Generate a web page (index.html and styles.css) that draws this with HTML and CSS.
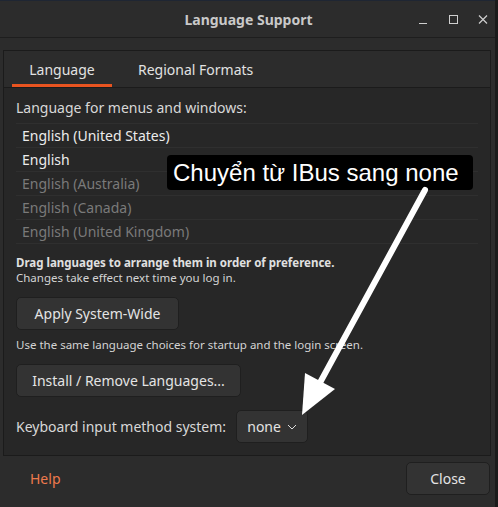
FILE: index.html
```html
<!DOCTYPE html>
<html>
<head>
<meta charset="utf-8">
<link rel="stylesheet" href="styles.css">
</head>
<body>
<div class="window">
  <div class="titlebar">
    <div></div>
    <div class="title">Language Support</div>
    <div class="controls">
      <svg class="ctl" width="12" height="12" viewBox="0 0 12 12"><path d="M2 9.5h8" stroke="#cfcfcf" stroke-width="1"/></svg>
      <svg class="ctl" width="12" height="12" viewBox="0 0 12 12"><rect x="2.5" y="1.5" width="8" height="8" fill="none" stroke="#cfcfcf" stroke-width="1"/></svg>
      <svg class="ctl" width="12" height="12" viewBox="0 0 12 12"><path d="M2 1.5l8 8M10 1.5l-8 8" stroke="#cfcfcf" stroke-width="1.2"/></svg>
    </div>
  </div>
  <div class="body">
    <div class="notebook">
      <div class="tabs">
        <div class="tab active">Language</div>
        <div class="tab">Regional Formats</div>
      </div>
      <div class="page">
        <div class="label">Language for menus and windows:</div>
        <div class="list">
          <div class="row">English (United States)</div>
          <div class="row">English</div>
          <div class="row dim">English (Australia)</div>
          <div class="row dim">English (Canada)</div>
          <div class="row dim">English (United Kingdom)</div>
        </div>
        <div class="note">
          <div class="strong">Drag languages to arrange them in order of preference.</div>
          <div>Changes take effect next time you log in.</div>
        </div>
        <div class="btnrow"><button class="btn apply">Apply System-Wide</button></div>
        <div class="note single">Use the same language choices for startup and the login screen.</div>
        <div class="btnrow"><button class="btn install">Install / Remove Languages...</button></div>
        <div class="kbrow">
          <span class="label">Keyboard input method system:</span>
          <button class="btn combo">none <svg width="10" height="6" viewBox="0 0 10 6"><path d="M1 1l4 4 4-4" fill="none" stroke="#dcdcdc" stroke-width="1"/></svg></button>
        </div>
      </div>
    </div>
    <div class="footer">
      <button class="help">Help</button>
      <button class="btn close">Close</button>
    </div>
  </div>
  <div class="callout">Chuyển từ IBus sang none</div>
  <svg class="arrow" width="498" height="507" viewBox="0 0 498 507">
    <line x1="425" y1="190" x2="316" y2="390" stroke="#fff" stroke-width="6" stroke-linecap="round"/>
    <polygon points="302,415 305,373 335,389" fill="#fff"/>
  </svg>
</div>
</body>
</html>
```
FILE: styles.css
```css
* { box-sizing: border-box; }
html, body { margin: 0; padding: 0; }
body {
  background: #1b1b1b;
  width: 498px;
  height: 507px;
  overflow: hidden;
  font-family: "Noto Sans", "DejaVu Sans", sans-serif;
  color: #dadada;
}
.window {
  position: relative;
  width: 495px;
  height: 507px;
  background: #2c2c2c;
  display: flex;
  flex-direction: column;
  border-top: 1px solid #1f2633;
}
.titlebar {
  height: 37px;
  border-bottom: 1px solid #1e1e1e;
  display: grid;
  grid-template-columns: 1fr auto 1fr;
  align-items: center;
}
.title {
  font-weight: bold;
  font-size: 14px;
  color: #c9c9c9;
  padding-left: 2px;
}
.controls {
  display: flex;
  justify-content: flex-end;
  gap: 18px;
  padding-right: 6px;
  padding-top: 1px;
}
.ctl { display: block; }
.body {
  flex: 1;
  display: flex;
  flex-direction: column;
  padding: 12px 4px 0 3px;
}
.notebook {
  border: 1px solid #1b1b1b;
  display: flex;
  flex-direction: column;
}
.tabs {
  height: 37px;
  display: flex;
  padding-left: 8px;
  border-bottom: 1px solid #1b1b1b;
  background: #2c2c2c;
}
.tab {
  font-size: 14px;
  color: #e2e2e2;
  display: flex;
  align-items: center;
  padding: 3px 26px 0 26px;
  border-bottom: 3px solid transparent;
}
.tab.active {
  border-bottom-color: #e95420;
  width: 100px;
  justify-content: center;
  padding: 3px 0 0 0;
}
.page {
  background: #272727;
  padding: 10px 12px 12px 12px;
  display: flex;
  flex-direction: column;
}
.label {
  font-size: 14px;
  line-height: 20px;
  color: #d8d8d8;
}
.list {
  margin-top: 5px;
  border-top: 1px solid #2f2f2f;
}
.row {
  height: 24px;
  line-height: 23px;
  border-bottom: 1px solid #2f2f2f;
  padding-left: 6px;
  font-size: 14px;
  color: #ececec;
}
.row.dim { color: #7a7a7a; }
.note {
  margin-top: 11px;
  font-size: 11.5px;
  line-height: 15px;
  color: #d4d4d4;
}
.note .strong { font-weight: bold; color: #e0e0e0; }
.note.single { margin-top: 7px; }
.btnrow { margin-top: 12px; display: flex; }
.btn {
  font-family: inherit;
  font-size: 14px;
  color: #e4e4e4;
  background: #333333;
  border: 1px solid #1f1f1f;
  border-radius: 5px;
  height: 33px;
  padding: 0 16px;
  display: flex;
  align-items: center;
  justify-content: center;
  white-space: nowrap;
}
.apply { width: 163px; padding: 0; }
.install { width: 225px; padding: 0; }
.kbrow {
  margin-top: 13px;
  display: flex;
  align-items: center;
  gap: 10px;
}
.combo {
  width: 72px;
  gap: 6px;
  padding: 0 10px;
}
.footer {
  flex: 1;
  display: flex;
  justify-content: space-between;
  align-items: flex-start;
  padding-top: 6px;
}
.help {
  font-family: inherit;
  font-size: 14px;
  color: #ee7a4d;
  background: none;
  border: none;
  height: 33px;
  padding: 0 14px;
  margin-left: 13px;
}
.close {
  width: 84px;
  margin-right: 1px;
}
.callout {
  position: absolute;
  left: 167px;
  top: 154px;
  width: 306px;
  height: 35px;
  background: #000;
  border-radius: 4px;
  color: #fff;
  font-family: "Liberation Sans", Arial, sans-serif;
  font-size: 24px;
  line-height: 35px;
  padding-left: 6px;
  white-space: nowrap;
}
.arrow {
  position: absolute;
  left: 0;
  top: -1px;
  pointer-events: none;
}
```
